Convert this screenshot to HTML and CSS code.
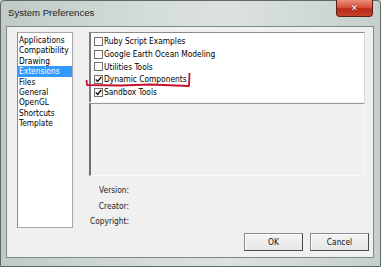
FILE: index.html
```html
<!DOCTYPE html>
<html lang="en">
<head>
    <meta charset="UTF-8">
    <meta name="viewport" content="width=device-width, initial-scale=1.0">
    <title>System Preferences</title>
    <link rel="stylesheet" href="styles.css">
</head>
<body>
    <div class="window">
        <div class="titlebar">
            <span class="title">System Preferences</span>
            <div class="closeBtn">&#x2715;</div>
        </div>
        <div class="client">
            <div class="topRow">
                <ul class="categories">
                    <li>Applications</li>
                    <li>Compatibility</li>
                    <li>Drawing</li>
                    <li class="selected">Extensions</li>
                    <li>Files</li>
                    <li>General</li>
                    <li>OpenGL</li>
                    <li>Shortcuts</li>
                    <li>Template</li>
                </ul>
                <div class="extPane">
                    <ul class="extList">
                        <li><span class="check"></span>Ruby Script Examples</li>
                        <li><span class="check"></span>Google Earth Ocean Modeling</li>
                        <li><span class="check"></span>Utilities Tools</li>
                        <li><span class="check"><svg width="7" height="7" viewBox="0 0 7 7"><path d="M0.8 3.4 L2.6 5.4 L6.3 1" fill="none" stroke="#111" stroke-width="1.4"/></svg></span>Dynamic Components</li>
                        <li><span class="check"><svg width="7" height="7" viewBox="0 0 7 7"><path d="M0.8 3.4 L2.6 5.4 L6.3 1" fill="none" stroke="#111" stroke-width="1.4"/></svg></span>Sandbox Tools</li>
                    </ul>
                    <div class="description"></div>
                    <div class="info">
                        <div class="infoRow"><span class="label">Version:</span></div>
                        <div class="infoRow"><span class="label">Creator:</span></div>
                        <div class="infoRow"><span class="label">Copyright:</span></div>
                    </div>
                </div>
            </div>
            <div class="buttons">
                <button>OK</button>
                <button>Cancel</button>
            </div>
        </div>

        <!-- hand drawn red mark under Dynamic Components -->
        <svg class="annotation" width="381" height="267" viewBox="0 0 381 267">
            <path d="M86.5 80 L87 85 L120 85.5 L150 84.5 L189 86 L189.5 73" fill="none" stroke="#c8102e" stroke-width="1.8" stroke-linejoin="round"/>
        </svg>
    </div>
</body>
</html>
```

FILE: styles.css
```css
* {
    box-sizing: border-box;
}

body {
    margin: 0;
    width: 381px;
    height: 267px;
    overflow: hidden;
    background: #c8d1cc;
    font-family: "DejaVu Sans Condensed", "DejaVu Sans", sans-serif;
    font-stretch: condensed;
    font-size: 8.3px;
    color: #000;
}

.window {
    position: relative;
    width: 381px;
    height: 267px;
    border: 1px solid #5f6865;
    border-radius: 4px 4px 0 0;
    background: linear-gradient(to right, #bfcac6, #d5ddd8 40%, #dce3de 60%, #c6d0cb);
    padding: 0 6px 8px 5px;
    display: flex;
    flex-direction: column;
}

.titlebar {
    height: 25px;
    display: flex;
    align-items: flex-start;
    justify-content: space-between;
}

.title {
    font-family: "Liberation Sans", Arial, sans-serif;
    font-stretch: normal;
    font-size: 9.6px;
    color: #1d2422;
    margin: 6px 0 0 2px;
}

.closeBtn {
    width: 37px;
    height: 17px;
    margin-top: -1px;
    margin-right: 1px;
    border: 1px solid #5b1d14;
    border-top: none;
    border-radius: 0 0 4px 4px;
    background: linear-gradient(to bottom, #e8907d, #d9533d 45%, #b52a17 55%, #c9412b);
    color: #fff;
    font-family: "DejaVu Sans", sans-serif;
    font-size: 9px;
    font-weight: bold;
    display: flex;
    align-items: center;
    justify-content: center;
    text-shadow: 0 0 2px #5b1d14;
}

.client {
    flex: 1;
    background: #f0f0f0;
    border: 1px solid #7f8985;
    padding: 5px 4px 4px 10px;
    display: flex;
    flex-direction: column;
}

.topRow {
    display: flex;
    gap: 16px;
}

ul {
    list-style: none;
    margin: 0;
}

.categories {
    width: 56px;
    height: 196px;
    padding: 2px 0 0 0;
    background: #fff;
    border: 1px solid #a8a8a8;
    border-left-color: #8a8a8a;
}

.categories li {
    height: 10.4px;
    line-height: 10.4px;
    padding-left: 1px;
}

.categories li.selected {
    background: #3399ff;
    color: #fff;
}

.extPane {
    width: 276px;
    display: flex;
    flex-direction: column;
}

.extList {
    height: 70px;
    padding: 2px 0 0 2px;
    background: #fff;
    border-top: 1px solid #8c8c8c;
    border-left: 2px solid #7a7a7a;
    border-right: 1px solid #d8d8d8;
}

.extList li {
    height: 12.7px;
    display: flex;
    align-items: center;
}

.check {
    width: 9px;
    height: 9px;
    border: 1px solid #707070;
    background: #fff;
    margin: 0 1px 0 1px;
    display: flex;
}

.check svg {
    display: block;
}

.description {
    height: 73px;
    margin-top: 1px;
    border-top: 1px solid #9a9a9a;
    border-left: 2px solid #6e6e6e;
    border-right: 1px solid #fafafa;
    border-bottom: 1px solid #fafafa;
    background: #f0f0f0;
}

.info {
    margin-top: 6px;
    display: flex;
    flex-direction: column;
}

.infoRow {
    height: 15.8px;
    display: flex;
    align-items: center;
}

.label {
    width: 40px;
    text-align: right;
    color: #222;
}

.buttons {
    margin-top: auto;
    display: flex;
    justify-content: flex-end;
    gap: 7px;
    padding-bottom: 2px;
}

.buttons button {
    width: 59px;
    height: 18px;
    padding: 0;
    font: inherit;
    color: #111;
    background: linear-gradient(to bottom, #f4f4f4, #e6e6e6);
    border: 1px solid #8a8a8a;
    border-right-color: #4a4a4a;
    border-bottom-color: #4a4a4a;
    box-shadow: inset 1px 1px 0 #fff;
}

.annotation {
    position: absolute;
    left: -1px;
    top: -1px;
    pointer-events: none;
}
```
